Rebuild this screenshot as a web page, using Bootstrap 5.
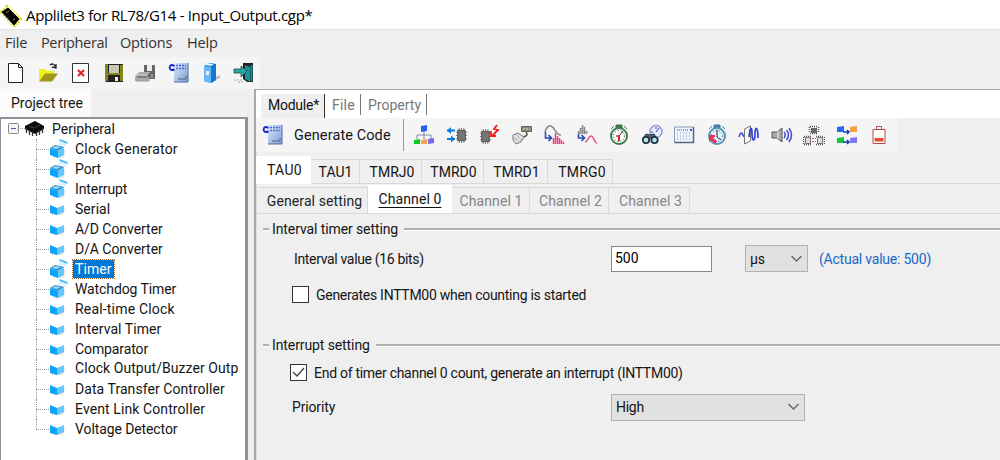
<!DOCTYPE html>
<html lang="en">
<head>
<meta charset="utf-8">
<title>Applilet3 for RL78/G14 - Input_Output.cgp*</title>
<link href="https://cdn.jsdelivr.net/npm/bootstrap@5.3.0/dist/css/bootstrap.min.css" rel="stylesheet">
<style>
body{width:1000px;height:460px;overflow:hidden;background:#efefef;color:#151515;font:14px/20px Roboto,"Liberation Sans",sans-serif;white-space:nowrap}
svg{display:block;flex:none}
.titlebar{height:29px;background:#fff;font:15px/28px "Open Sans",sans-serif;color:#000}
.titlebar span{letter-spacing:-.33px}
.menus{height:28px;font:14.5px/25px "Open Sans",sans-serif;color:#333;padding-left:5px;border-top:1px solid #e2e2e2;letter-spacing:-.2px}
.menus a{color:inherit;text-decoration:none}
.maintools{height:32px;width:260px;background:#f5f5f5;padding:0 0 0 5px}
.maintools svg{width:22px;height:22px}
.workspace{height:371px}
.side{width:248px}
.side-tab{width:91px;height:28px;background:#fbfbfb;padding:4px 0 0 11px}
.tree{height:343px;background:#fff;border:solid #8d929a;border-width:2px 3px 0 1px;padding-left:7px;letter-spacing:.06px}
.node{height:20px}
.leaf{padding-left:28px;position:relative}
.leaf::before{content:"";width:13px;border-top:1px dotted #999}
.stem{border-left:1px dotted #999;position:absolute;left:28px;top:0;height:20px}
.leaf:last-child .stem{height:10px}
.leaf svg{width:20px;height:20px}
.leaf span{padding:0 2px;margin-left:4px;line-height:18px}
.leaf span.sel{background:#0078d7;color:#fff;outline:1px dotted #b66a20;outline-offset:0}
.mainpane{margin-left:6px;border-left:2px solid #a8a8a8;border-top:1px solid #aaa;width:746px;box-shadow:inset 1px 0 #ddd}
.doc-tabs{height:28px;background:#fff;padding:4px 0 0 5px;color:#777}
.doc-tabs div{height:21px;line-height:22px;border-right:1px solid #777;padding-left:7px}
.doc-tabs .cur{background:#efefef;color:#111;height:24px;border-color:#333;letter-spacing:-.25px}
.gentools{height:34px;width:642px;background:#f5f5f5;padding-left:6px}
.gentools svg{width:22px;height:22px;margin-right:10.5px}
.gentools b{font-weight:400;width:110px;font-size:14.5px;letter-spacing:.1px;margin-left:10px;padding-top:2px;margin-right:-1px}
.gentools i{width:1px;height:32px;background:#999;margin-right:9px}
.tabs1{height:32px;padding-top:5px;border-bottom:1px solid #d8d8d8}
.tabs1 div,.tabs2 div{border:1px solid #d8d8d8;border-width:1px 1px 0 0;text-align:center}
.tabs1 div{height:25px;line-height:25px;margin-top:2px;padding-left:1px}
.tabs1 .cur,.tabs2 .cur{background:#fff;border-color:#fff}
.tabs1 .cur{height:28px;margin-top:-1px;line-height:27px;padding-left:3px;letter-spacing:.3px}
.tabs2{height:30px;padding:3px 0 0 3px;border-bottom:1px solid #d8d8d8;color:#858585}
.tabs2 div{height:26px;line-height:27px;padding-left:1px;letter-spacing:.1px}
.tabs2 .cur{height:28px;margin-top:-2px;line-height:26px;color:#111;text-decoration:underline;text-underline-offset:3px}
.group{padding:0 0 0 7px}
.group-head{height:20px;letter-spacing:-.1px}
.group-head span{margin-top:-1px}
.group-head::before,.group-head::after{content:"";height:3px;background:#b0b0b0;border-bottom:1px solid #fff}
.group-head::before{width:6px;margin-right:3px}.group-head::after{flex:1;margin-left:6px}
.fields{letter-spacing:-.28px}
.box{width:17px;height:17px;border:1px solid #333;background:#fff;flex:none}
.entry{border:1px solid #888;background:#fff;width:101px;height:26px;padding:0 3px 2px;border-radius:0;font:inherit}
.pick{border:1px solid #b2b2b2;background:#e1e1e1;height:27px;padding:0 4px}
</style>
</head>
<body>
<svg width="0" height="0" class="position-absolute">
<defs>
<linearGradient id="blue" x2="1" y2="1"><stop stop-color="#dae9ff"/><stop offset="1" stop-color="#7d9fd2"/></linearGradient>
<symbol id="open" viewBox="0 0 20 20"><path d="M3 19h12l2-9-6 3z" fill="#ddd" opacity=".6"/><path d="M10 1l8 4-3 4-6-2z" fill="#e4f4fd"/><path d="M10.500 0l8 3v2l-8-3z" fill="#45bdf8"/><path d="M1 9l5-3 9 2-6 4z" fill="#2c8fc9"/><path d="M6 7l6 1-4 2-5-1z" fill="#9bd8f8"/><path d="M1 9l8 3v7l-8-3z" fill="#0aa5f8"/><path d="M9 12l6-4v8l-6 3z" fill="#61c7fc"/></symbol>
<symbol id="shut" viewBox="0 0 20 20"><path d="M3 16h11l3-8z" fill="#ddd" opacity=".6"/><path d="M1 6l7 3v7l-7-2z" fill="#0aa5f8"/><path d="M8 9l7-3v7l-7 3z" fill="#61c7fc"/></symbol>
<symbol id="gen" viewBox="0 0 22 22"><path d="M6 1h14v19H6z" fill="url(#blue)"/><path d="M20 1v19H6" fill="none" stroke="#526da2"/><path d="M8 3.500h10M8 6.500h10" stroke="#5263d0" stroke-width="1.500" stroke-dasharray="2 1"/><path d="M10 17h8v-3" fill="none" stroke="#567"/><path d="M6.500 4Q2 1.500 1.700 5.300T6.500 7.500" fill="none" stroke="#1b20c8" stroke-width="1.900"/></symbol>
<symbol id="cpu" viewBox="0 0 12 16"><path d="M3.500 0v16M6 0v16M8.500 0v16M0 4.500h12M0 8h12M0 11.500h12" stroke="#777"/><path d="M2 2.500h8v11H2z" fill="#777" stroke="#4c4c4c"/></symbol>
</defs></svg>

<header class="titlebar d-flex align-items-center">
<svg width="22" height="24" viewBox="0 0 22 24"><path d="M2 9L7 4l13 12-6 7z" fill="none" stroke="#e2df20" stroke-width="4" stroke-dasharray="1.500 1.500"/><path d="M2 9L8 5l11 11-5 6z" fill="#050505" stroke="#050505"/><path d="M6 10l3-2M13 17l2-1" stroke="#888"/></svg>
<span style="margin-left:4px">Applilet3 for RL78/G14 - Input_Output.cgp*</span></header>
<nav class="menus d-flex"><a href="#" style="width:36px">File</a><a href="#" style="width:79px;letter-spacing:-.35px">Peripheral</a><a href="#" style="width:67px">Options</a><a href="#">Help</a></nav>
<div class="maintools d-flex align-items-center" style="gap:10.5px">
<svg viewBox="0 0 22 22"><path d="M3.500 1.500h10l4 4v15h-14z" fill="#fff" stroke="#222"/><path d="M13.500 1.500v4h4" fill="none" stroke="#222"/></svg>
<svg viewBox="0 0 22 22"><path d="M1 7h6l2 2h7v10H1z" fill="#f3f018"/><path d="M1 19.500l6-8h13l-6 8z" fill="#a0981c"/><path d="M12 3q4-3 6 3m-4-1l4 1V2" fill="none" stroke="#222" stroke-width="1.300"/></svg>
<svg viewBox="0 0 22 22"><path d="M2.500 1.500h16v19h-16z" fill="#fff" stroke="#333"/><path d="M8 8l6 6m0-6l-6 6" stroke="#e51d20" stroke-width="2"/></svg>
<svg viewBox="0 0 22 22"><path d="M2 2h18v18H3l-1-1z" fill="#222"/><path d="M2 2h3v17H2zM17 3h3v16h-3zM5 11h12v2H5z" fill="#85851e"/><path d="M6 3h10v8H6z" fill="#c7c7b5"/><path d="M12 15h3v4h-3z" fill="#eee"/></svg>
<svg viewBox="0 0 22 22"><path d="M9 3h11v14H9z" fill="#666"/><path d="M12 3h5v6h-5z" fill="#eee"/><path d="M0 14l4-4h11l-3 4v5H0z" fill="#bbb"/><path d="M1 15h13v4H1zM4 11h9" stroke="#999" fill="#aaa"/><path d="M2 15h10" stroke="#555"/><path d="M17 12v4" stroke="#ccc"/></svg>
<svg viewBox="0 0 22 22"><use href="#gen"/></svg>
<svg viewBox="0 0 22 22"><path d="M13 19l7-3v-3l-7 3z" fill="#bbb"/><path d="M4 4q4-4 12-2v16l-5 3-7-2z" fill="#087bd5"/><path d="M11 5l5-3v16l-5 3z" fill="#1179d0"/><path d="M4 4l7 1v16l-7-2z" fill="#64b9fb"/><path d="M6 2h8l-3 2-6-1z" fill="#e8f5ff"/><path d="M6 9h3v4H6z" fill="#eef"/></svg>
<svg viewBox="0 0 22 22"><path d="M10 1h10v19h-6l-4-3z" fill="#222"/><path d="M12 3l5 2v15l-5-3z" fill="#159595"/><path d="M18.500 3v16" stroke="#149393" stroke-width="2"/><path d="M1 7h7V4l6 5-6 6v-4H1z" fill="#22aaa5" stroke="#244" stroke-width=".8"/><path d="M1 18h9M5 20h6" stroke="#aaa" stroke-dasharray="2 1"/></svg>
</div>

<div class="workspace d-flex">
<aside class="side">
<div class="side-tab" style="letter-spacing:.02px">Project tree</div>
<div class="tree">
<div class="node d-flex align-items-center"><svg width="42" height="20" viewBox="0 0 42 20"><rect x=".5" y="4.500" width="10" height="10" rx="1" fill="#f4f4f4" stroke="#888"/><path d="M3 9.500h5" stroke="#3b61ad"/><path d="M12 9.500h5" stroke="#aaa" stroke-dasharray="1 1"/><path d="M17 7l10-5 9 5v3l-9 5-10-5z" fill="#0a0a0a"/><path d="M21 7l5 2 6-3" fill="none" stroke="#666" stroke-width=".6"/><path d="M18.500 9v5m3-3v5m3-3v4m4-4v4m3-6v5m3-7v5" stroke="#333" stroke-width="1.300"/></svg><span style="margin-left:2px;letter-spacing:0">Peripheral</span></div>
<div class="node leaf d-flex align-items-center"><i class="stem"></i><svg><use href="#open"/></svg><span style="letter-spacing:.2px">Clock Generator</span></div>
<div class="node leaf d-flex align-items-center"><i class="stem"></i><svg><use href="#open"/></svg><span style="letter-spacing:-.1px">Port</span></div>
<div class="node leaf d-flex align-items-center"><i class="stem"></i><svg><use href="#open"/></svg><span style="letter-spacing:-.1px">Interrupt</span></div>
<div class="node leaf d-flex align-items-center"><i class="stem"></i><svg><use href="#shut"/></svg><span>Serial</span></div>
<div class="node leaf d-flex align-items-center"><i class="stem"></i><svg><use href="#shut"/></svg><span style="letter-spacing:-.05px">A/D Converter</span></div>
<div class="node leaf d-flex align-items-center"><i class="stem"></i><svg><use href="#shut"/></svg><span style="letter-spacing:-.05px">D/A Converter</span></div>
<div class="node leaf d-flex align-items-center"><i class="stem"></i><svg><use href="#open"/></svg><span class="sel">Timer</span></div>
<div class="node leaf d-flex align-items-center"><i class="stem"></i><svg><use href="#open"/></svg><span style="letter-spacing:-.1px">Watchdog Timer</span></div>
<div class="node leaf d-flex align-items-center"><i class="stem"></i><svg><use href="#shut"/></svg><span style="letter-spacing:.18px">Real-time Clock</span></div>
<div class="node leaf d-flex align-items-center"><i class="stem"></i><svg><use href="#shut"/></svg><span>Interval Timer</span></div>
<div class="node leaf d-flex align-items-center"><i class="stem"></i><svg><use href="#shut"/></svg><span style="letter-spacing:-.1px">Comparator</span></div>
<div class="node leaf d-flex align-items-center"><i class="stem"></i><svg><use href="#shut"/></svg><span style="margin-top:-2px">Clock Output/Buzzer Outp</span></div>
<div class="node leaf d-flex align-items-center"><i class="stem"></i><svg><use href="#shut"/></svg><span>Data Transfer Controller</span></div>
<div class="node leaf d-flex align-items-center"><i class="stem"></i><svg><use href="#shut"/></svg><span style="letter-spacing:.1px">Event Link Controller</span></div>
<div class="node leaf d-flex align-items-center"><i class="stem"></i><svg><use href="#shut"/></svg><span style="letter-spacing:-.1px">Voltage Detector</span></div>
</div>
</aside>
<main class="mainpane">
<div class="doc-tabs d-flex"><div class="cur" style="width:64px">Module*</div><div style="width:36px;letter-spacing:.2px">File</div><div style="width:66px">Property</div></div>
<div class="gentools d-flex align-items-center">
<svg viewBox="0 0 22 22" style="margin-right:0"><use href="#gen"/></svg><b>Generate Code</b><i></i>
<svg viewBox="0 0 22 22"><path d="M11 7v4M4 15v-4h14v4M11 11v4" fill="none" stroke="#7e8ca8"/><path d="M8 2l6-1v6l-6 1z" fill="#2762ef"/><path d="M1 16l6-1v5H1z" fill="#0cc927"/><path d="M8 16l6-1v5H8z" fill="#f6a250"/><path d="M15 15l6-1v5l-6 1z" fill="#746cf0"/></svg>
<svg viewBox="0 0 22 22"><path d="M1 6.500h8M1 15h8" stroke="#087be5" stroke-width="1.800"/><path d="M5 3L1 6.500 5 10zM5 11.500l4 3.500-4 3.500z" fill="#087be5"/><use href="#cpu" x="9" y="4" width="13" height="15"/></svg>
<svg viewBox="0 0 22 22"><use href="#cpu" x="1" y="5" width="13" height="15"/><path d="M19 1l-3 4 4 1-6 6m-1-5v5h5" fill="none" stroke="#f12020" stroke-width="1.800"/></svg>
<svg viewBox="0 0 22 22"><path d="M10.500 2.500h10v5h-10z" fill="#8c8672" stroke="#66645a"/><path d="M12 5h7" stroke="#ddd" stroke-dasharray="2 1"/><path d="M15 8q3 4-3 5" fill="none" stroke="#555" stroke-width="1.500"/><path d="M2 11l5-2 6 4-3 5-5 2-3-4z" fill="#e4e4e4" stroke="#777"/><path d="M5 10l5 6M3 14l5 3" stroke="#aaa"/></svg>
<svg viewBox="0 0 22 22"><path d="M2 8q2-7 6-6c5 2 4 9 10 9" fill="none" stroke="#888" stroke-width="1.500"/><path d="M2.500 8v6H8M5.500 11l3 3-3 3" fill="none" stroke="#254bb6" stroke-width="1.600"/><path d="M10.500 20v-6m2 6V9m2 11v-8m2 8v-6m2 6v-4m2 4v-2" stroke="#ee3b83" stroke-width="1.500"/></svg>
<svg viewBox="0 0 22 22"><path d="M2.500 10V7m2 3V4m2 6V1m2 9V3m2 7V7" stroke="#888" stroke-width="1.600"/><path d="M2.500 10v4H8M5.500 11l3 3-3 3" fill="none" stroke="#254bb6" stroke-width="1.600"/><path d="M9 18c3 0 3-6 6-6s3 7 6 7" fill="none" stroke="#ef5189" stroke-width="1.600"/></svg>
<svg viewBox="0 0 22 22"><path d="M8 1h6v3H8zM3 5l3-3M16 2l3 3" fill="#347948" stroke="#347948"/><circle cx="11" cy="12" r="8" fill="#fff" stroke="#3d7d4d" stroke-width="2"/><circle cx="11" cy="12" r="5.500" fill="none" stroke="#333" stroke-dasharray="1 2"/><path d="M11 12l4-5M11 12H8" stroke="#222"/><path d="M11 11v6" stroke="#dd2020" stroke-width="2"/></svg>
<svg viewBox="0 0 22 22"><circle cx="15" cy="7.500" r="6" fill="#e9edff" stroke="#96a1d8" stroke-width="1.700"/><path d="M15 8l3-4M15 3v2M10 8h2" stroke="#3447b0"/><path d="M2 15l3-5 4 1 4-1 3 5" fill="#536678" stroke="#213243"/><circle cx="5" cy="16" r="3.200" fill="#bfe2ec" stroke="#223344" stroke-width="1.800"/><circle cx="13.500" cy="16" r="3.200" fill="#bfe2ec" stroke="#223344" stroke-width="1.800"/></svg>
<svg viewBox="0 0 22 22"><path d="M1.500 3h19v15.500h-19z" fill="#edf3ff" stroke="#8799b0"/><path d="M1.500 18.500h19V3" fill="none" stroke="#506787" stroke-width="1.500"/><path d="M4 6h12" stroke="#f57b70" stroke-width="2" stroke-dasharray="1 1"/><path d="M4 9h14M4 12h14M4 15h14" stroke="#8797b2" stroke-dasharray="1 2"/><path d="M18 5v2" stroke="#255fca" stroke-width="2"/></svg>
<svg viewBox="0 0 22 22"><path d="M8 1h6v3H8zM3 5l3-3M16 2l3 3" fill="#417ca0" stroke="#417ca0"/><circle cx="11" cy="12" r="8" fill="#e4f5ff" stroke="#5795b8" stroke-width="2"/><circle cx="11" cy="12" r="5.500" fill="none" stroke="#445" stroke-dasharray="1 2"/><path d="M11 13V6M11 13l4 3" stroke="#223"/><path d="M3 11h6v2l-2 1 4 3-1 2H8l-3-3-2 2z" fill="#eb3159"/></svg>
<svg viewBox="0 0 22 22"><path d="M1 13q2-7 4-2l2 3" fill="none" stroke="#3344d8" stroke-width="1.500"/><path d="M6.500 5l6-3v15l-6 3z" fill="#f7f7f7" stroke="#777"/><path d="M11 13C12 2 14 2 14 10s3 8 3 0 3-8 3 4" fill="none" stroke="#3344d8" stroke-width="1.700"/></svg>
<svg viewBox="0 0 22 22"><path d="M1 8h5l5-4v14l-5-4H1z" fill="#aaa" stroke="#555"/><path d="M7 7v8" stroke="#eee"/><path d="M13 8q2.500 3 0 6M15.500 6q4 5 0 10M18 4q5 7 0 14" fill="none" stroke="#3f4bd4" stroke-width="1.500"/></svg>
<svg viewBox="0 0 22 22"><g fill="none" stroke="#555" stroke-dasharray="1 1"><path d="M7 2.500h8M7 9.500h8M1 12.500h8M1 20.500h8M13 12.500h8M13 20.500h8M6.500 3v6M15.500 3v6M.5 13v7M21.500 13v7" stroke-width="1.500"/></g><path d="M8 4h6v5H8z" fill="#666"/><path d="M2.500 13.500h5v6h-5zM14.500 13.500h5v6h-5z" fill="#ddd" stroke="#777"/><path d="M9 14.500h4M9 17.500h4" stroke="#ed4545" stroke-dasharray="2 1"/></svg>
<svg viewBox="0 0 22 22"><path d="M1 3l7-1v6H1z" fill="#2869ed"/><path d="M14 3l7-1v6h-7z" fill="#f7a048"/><path d="M1 14l7-1v6H1z" fill="#12c937"/><path d="M14 14l7-1v6h-7z" fill="#8474f4"/><path d="M7 8h6m-2-2l2 2-2 2M7 18h6m-2-2l2 2-2 2" fill="none" stroke="#173bd0" stroke-width="1.500"/></svg>
<svg viewBox="0 0 22 22" style="margin:0"><path d="M8.500 2.500h5v3h-5zM5 5.500h12v14H5z" fill="#fff" stroke="#b64a4a"/><path d="M6.500 14h9v3.500h-9z" fill="#e54930"/></svg>
</div>
<div class="tabs1 d-flex align-items-start"><div class="cur" style="width:55px">TAU0</div><div style="width:49px">TAU1</div><div style="width:62px;padding-left:3px">TMRJ0</div><div style="width:62px;padding-left:2px">TMRD0</div><div style="width:64px;padding-left:2px">TMRD1</div><div style="width:65px;padding-left:4px;letter-spacing:.2px">TMRG0</div></div>
<div class="tabs2 d-flex align-items-start"><div class="text-dark" style="width:109px;padding-left:3px">General setting</div><div class="cur" style="width:84px">Channel 0</div><div style="width:78px">Channel 1</div><div style="width:79px;padding-left:3px">Channel 2</div><div style="width:81px;padding-left:3px">Channel 3</div></div>
<section class="group" style="height:116px;padding-top:5px">
<div class="group-head d-flex align-items-center"><span>Interval timer setting</span></div>
<div class="fields d-flex align-items-center" style="height:39px;padding-left:31px"><label style="width:317px;letter-spacing:-.34px">Interval value (16 bits)</label><input class="entry" value="500" aria-label="Interval value"><div class="pick d-flex align-items-center justify-content-between" style="width:63px;margin-left:33px"><span>µs</span><svg width="13" height="8" viewBox="0 0 13 8"><path d="M1.500 1l5 5 5-5" fill="none" stroke="#666" stroke-width="1.400"/></svg></div><span style="color:#1769c7;margin-left:11px;letter-spacing:-.22px">(Actual value: 500)</span></div>
<div class="fields d-flex align-items-center" style="height:33px;padding-left:29px"><span class="box"></span><label style="margin-left:7px">Generates INTTM00 when counting is started</label></div>
</section>
<section class="group" style="padding-top:5px">
<div class="group-head d-flex align-items-center"><span>Interrupt setting</span></div>
<div class="fields d-flex align-items-center" style="height:35px;padding-left:27px"><span class="box"><svg width="15" height="15" viewBox="0 0 15 15"><path d="M2 7l4 4 7-8" fill="none" stroke="#444" stroke-width="1.400"/></svg></span><label style="margin-left:7px">End of timer channel 0 count, generate an interrupt (INTTM00)</label></div>
<div class="fields d-flex align-items-center" style="height:34px;padding-left:29px"><label style="width:319px;letter-spacing:-.15px">Priority</label><div class="pick d-flex align-items-center justify-content-between" style="width:194px"><span>High</span><svg width="13" height="8" viewBox="0 0 13 8"><path d="M1.500 1l5 5 5-5" fill="none" stroke="#666" stroke-width="1.400"/></svg></div></div>
</section>
</main>
</div>
<script src="https://cdn.jsdelivr.net/npm/bootstrap@5.3.0/dist/js/bootstrap.bundle.min.js"></script>
</body>
</html>
